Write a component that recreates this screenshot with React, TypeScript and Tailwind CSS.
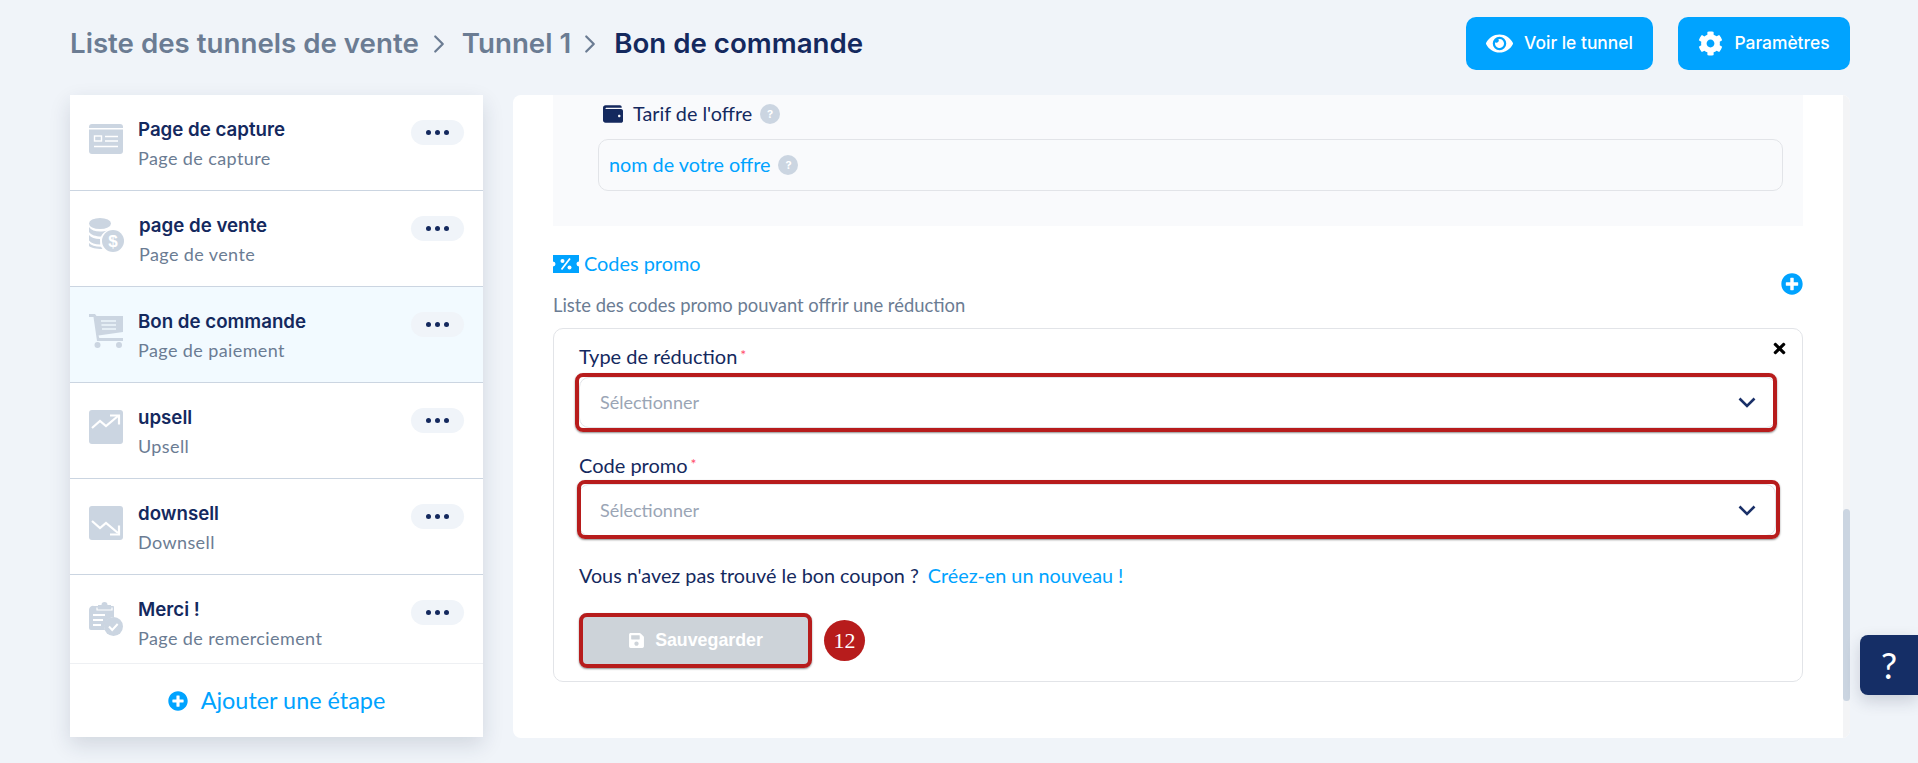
import React from "react";
import { FaCog, FaEye, FaPlusCircle, FaSave, FaTimes, FaWallet } from "react-icons/fa";
import { LuChevronRight } from "react-icons/lu";

const inter = "font-['Inter',sans-serif]";
const geo = "font-['Lato',sans-serif]";

const CaptureIcon = () => (
  <svg width="34" height="31" viewBox="0 0 34 31">
    <path d="M3 0h28a3 3 0 0 1 3 3v1H0V3a3 3 0 0 1 3-3z" fill="#cbd5e1" />
    <path d="M0 5.500h34V27a3 3 0 0 1-3 3H3a3 3 0 0 1-3-3z" fill="#cbd5e1" />
    <rect x="5.500" y="12" width="7" height="5" fill="none" stroke="#fff" strokeWidth="1.400" />
    <path d="M16 12.500h13M16 17h13M5 22.500h24" stroke="#fff" strokeWidth="1.400" />
  </svg>
);

const CoinsIcon = () => (
  <svg width="35" height="35" viewBox="0 0 35 35">
    <ellipse cx="11" cy="5.500" rx="11" ry="5.500" fill="#cbd5e1" />
    <path d="M0 9c2 3 6 4.500 11 4.500 3 0 5-.3 7-1-3 1.500-5 3.500-6 6-5 0-10-1.500-12-4.500z" fill="#cbd5e1" />
    <path d="M0 17c2 2.500 6 4 11 4l.2 5.500C6 26.500 2 25 0 22.500z" fill="#cbd5e1" />
    <path d="M0 25c2 2.500 6 3.500 12 3.800l1.500 2.200C7 31 2 30 0 28z" fill="#cbd5e1" />
    <circle cx="24" cy="23" r="11" fill="#cbd5e1" />
    <text x="24" y="29" textAnchor="middle" fontSize="17" fontWeight="700" fill="#fff" fontFamily="Liberation Sans">$</text>
  </svg>
);

const CartIcon = () => (
  <svg width="34" height="34" viewBox="0 0 34 34">
    <path d="M0 0h6l1.500 2H34v16L9.500 21.500l.8 2.500H34v3H8L4.500 3H0z" fill="#cbd5e1" />
    <path d="M12 7h15M12.500 11h14.500M13 15h14" stroke="#eef6fc" strokeWidth="1.400" />
    <circle cx="8.500" cy="31" r="3" fill="#cbd5e1" />
    <circle cx="30" cy="31" r="3" fill="#cbd5e1" />
  </svg>
);

const UpIcon = () => (
  <svg width="34" height="34" viewBox="0 0 34 34">
    <rect width="34" height="34" rx="3" fill="#cbd5e1" />
    <path d="M3 18l8-7 6 5 12-10" fill="none" stroke="#fff" strokeWidth="2.200" />
    <path d="M21 5.500h9v9" fill="none" stroke="#fff" strokeWidth="2.200" />
  </svg>
);

const DownIcon = () => (
  <svg width="34" height="34" viewBox="0 0 34 34">
    <rect width="34" height="34" rx="3" fill="#cbd5e1" />
    <path d="M3 15l8 7 6-5 12 10" fill="none" stroke="#fff" strokeWidth="2.200" />
    <path d="M21 28.500h9v-9" fill="none" stroke="#fff" strokeWidth="2.200" />
  </svg>
);

const ClipboardIcon = () => (
  <svg width="34" height="34" viewBox="0 0 34 34">
    <path d="M5 4h4V3h3.500a3 3 0 0 1 6 0H22v1h2a1 1 0 0 1 1 1v10a10 10 0 0 0-9 13H2a2 2 0 0 1-2-2V8a4 4 0 0 1 5-4z" fill="#cbd5e1" />
    <path d="M8 5.500v2.500h15V5.500" fill="none" stroke="#fff" strokeWidth="1.200" />
    <path d="M4 13h12M4 18h10M4 23h8" stroke="#fff" strokeWidth="1.800" />
    <circle cx="24.500" cy="24.500" r="9.500" fill="#cbd5e1" />
    <path d="M20 24.500l3.200 3.500 5.500-6" fill="none" stroke="#fff" strokeWidth="2" />
  </svg>
);

const TicketIcon = () => (
  <svg width="26" height="18" viewBox="0 0 26 18">
    <path d="M0 0h26v6.500a2.500 2.500 0 0 0 0 5V18H0v-6.500a2.500 2.500 0 0 0 0-5z" fill="#00a3ff" />
    <path d="M8.500 14.500L17 3.500" stroke="#fff" strokeWidth="1.800" />
    <circle cx="9.500" cy="6" r="2" fill="#fff" />
    <circle cx="16.500" cy="12.500" r="2" fill="#fff" />
  </svg>
);

const Chevron = () => (
  <svg width="18" height="11" viewBox="0 0 18 11" fill="none" stroke="#1a3068" strokeWidth="2.600">
    <path d="M1.500 1.500L9 9l7.500-7.500" />
  </svg>
);

const steps = [
  { title: "Page de capture", sub: "Page de capture", icon: <CaptureIcon />, iconTop: "pt-[6px]", height: "h-[96px] border-b border-[#cbd5e1]" },
  { title: "page de vente", sub: "Page de vente", icon: <CoinsIcon />, iconTop: "pt-[4px]", height: "h-[96px] border-b border-[#cbd5e1]" },
  { title: "Bon de commande", sub: "Page de paiement", icon: <CartIcon />, iconTop: "pt-[4px]", height: "h-[96px] border-b border-[#cbd5e1] bg-[#f2faff]" },
  { title: "upsell", sub: "Upsell", icon: <UpIcon />, iconTop: "pt-[4px]", height: "h-[96px] border-b border-[#cbd5e1]" },
  { title: "downsell", sub: "Downsell", icon: <DownIcon />, iconTop: "pt-[4px]", height: "h-[96px] border-b border-[#cbd5e1]" },
  { title: "Merci !", sub: "Page de remerciement", icon: <ClipboardIcon />, iconTop: "pt-[4px]", height: "h-[88px]" },
];

const Help = () => (
  <span className={`${inter} flex h-5 w-5 items-center justify-center rounded-full bg-[#cbd5e1] text-[11px] font-bold text-white`}>?</span>
);

const Dots = () => (
  <div className="mt-[2px] flex h-[25px] w-[53px] items-center justify-center gap-[4px] rounded-full bg-[#f0f4f9]">
    <span className="h-[5px] w-[5px] rounded-full bg-[#14295e]" />
    <span className="h-[5px] w-[5px] rounded-full bg-[#14295e]" />
    <span className="h-[5px] w-[5px] rounded-full bg-[#14295e]" />
  </div>
);

const Marked = ({ className }: { className: string }) => (
  <span className={`pointer-events-none absolute rounded-[8px] border-[4px] border-[#b71c1c] shadow-[0_1px_2px_rgba(0,0,0,0.45)] ${className}`} />
);

const SelectField = ({ label, box, mark }: { label: string; box: string; mark: string }) => (
  <div>
    <div className={`${geo} h-[26px] text-[20px] leading-[26px] text-[#14295e]`}>
      {label}
      <span className="relative -top-[4px] ml-[3px] text-[14px] text-[#ff4d6a]">*</span>
    </div>
    <div className={`relative flex items-center justify-between rounded-[10px] border border-[#e2e4e8] bg-white pl-[20px] pr-[19px] ${box}`}>
      <span className={`${geo} text-[18px] text-[#9aa5b5]`}>Sélectionner</span>
      <Chevron />
      <Marked className={mark} />
    </div>
  </div>
);

function App() {
  return (
    <div className="relative flex h-[763px] w-full flex-col overflow-hidden bg-[#f0f4f9]">
      <header className="flex h-[95px] shrink-0 items-center justify-between pb-[8px] pl-[70px] pr-[68px]">
        <div className={`${inter} mt-[1px] flex items-center text-[27.700px] font-semibold`}>
          <span className="text-[#6b7c93]">Liste des tunnels de vente</span>
          <LuChevronRight className="ml-[5px] mr-[8px] text-[#6b7c93]" size={30} strokeWidth={1.800} />
          <span className="text-[#6b7c93]">Tunnel 1</span>
          <LuChevronRight className="ml-[4px] mr-[9px] text-[#6b7c93]" size={30} strokeWidth={1.800} />
          <span className="text-[#14295e]">Bon de commande</span>
        </div>
        <div className={`${inter} flex gap-[25px] text-[17.400px] font-medium text-white`}>
          <button className="flex h-[53px] w-[187px] items-center justify-center gap-[11px] rounded-[10px] bg-[#00a3ff]">
            <FaEye size={27} />
            Voir le tunnel
          </button>
          <button className="flex h-[53px] w-[172px] items-center justify-center gap-[11px] rounded-[10px] bg-[#00a3ff]">
            <FaCog size={25} />
            Paramètres
          </button>
        </div>
      </header>

      <div className="flex h-[643px] shrink-0 gap-[30px] pl-[70px] pr-[68px]">
        <aside className="flex h-[642px] w-[413px] shrink-0 flex-col bg-white shadow-[0_8px_20px_rgba(30,40,70,0.14)]">
          {steps.map((step) => (
            <div key={step.title} className={`flex shrink-0 justify-between px-[19px] pt-[23px] ${step.height}`}>
              <div className="flex gap-[15px]">
                <div className={step.iconTop}>{step.icon}</div>
                <div className="-mt-[3px]">
                  <div className={`${inter} text-[18.700px] leading-[29px] font-semibold text-[#14295e]`}>{step.title}</div>
                  <div className={`${geo} text-[18px] leading-[28px] tracking-[0.4px] text-[#6b7c93]`}>{step.sub}</div>
                </div>
              </div>
              <Dots />
            </div>
          ))}
          <div className="flex h-[74px] shrink-0 items-center justify-center gap-[13px] border-t border-[#eef0f3] bg-white">
            <FaPlusCircle className="text-[#00a3ff]" size={20} />
            <span className={`${geo} text-[23.400px] text-[#00a3ff]`}>Ajouter une étape</span>
          </div>
        </aside>

        <main className="flex flex-1 overflow-hidden rounded-[8px] bg-white">
          <div className="flex-1 px-[40px]">
            <section className="h-[131px] bg-[#f9fafc] pl-[45px] pr-[20px] pt-[9px]">
              <div className={`${geo} ml-[5px] flex h-[20px] items-center gap-[10px] text-[19.800px] text-[#14295e]`}>
                <FaWallet size={20} />
                <div className="flex items-center gap-[8px]">
                  Tarif de l'offre
                  <Help />
                </div>
              </div>
              <div className={`${geo} mt-[15px] flex h-[52px] items-center gap-[8px] rounded-[10px] border border-[#e2e4e8] pl-[10px] text-[19.800px] text-[#00a3ff]`}>
                nom de votre offre
                <Help />
              </div>
            </section>

            <div className="relative mt-[26px]">
              <div className={`${geo} flex h-[24px] items-center gap-[5px] text-[19.900px] text-[#00a3ff]`}>
                <TicketIcon />
                Codes promo
              </div>
              <div className={`${geo} mt-[17px] text-[18.400px] leading-[24px] text-[#6b7c93]`}>
                Liste des codes promo pouvant offrir une réduction
              </div>
              <FaPlusCircle className="absolute right-0 top-[21px] text-[#00a3ff]" size={22} />
            </div>

            <section className="relative mt-[11px] h-[354px] rounded-[10px] border border-[#e2e4e8] pl-[25px] pr-[26px] pt-[14px]">
              <FaTimes className="absolute right-[14px] top-[11px] text-black" size={17} />
              <div className="flex flex-col gap-[24px]">
                <SelectField label="Type de réduction" box="mt-[8px] h-[51px]" mark="-left-[5px] -right-[2px] -top-[5px] -bottom-[5px]" />
                <SelectField label="Code promo" box="mt-[6px] h-[52px]" mark="-left-[3px] -right-[5px] -top-[5px] -bottom-[4px]" />
              </div>
              <div className={`${geo} mt-[28px] flex h-[24px] items-center text-[19.800px] text-[#14295e]`}>
                Vous n'avez pas trouvé le bon coupon ?
                <span className="ml-[9px] text-[#00a3ff]">Créez-en un nouveau !</span>
              </div>
              <div className="mt-[25px] flex items-center gap-[12px]">
                <button className="relative flex h-[55px] w-[233px] items-center justify-center gap-[10px] rounded-[8px] bg-[#cdd3d9] font-['Liberation_Sans',sans-serif] text-[17.800px] font-bold text-white">
                  <FaSave size={17} />
                  Sauvegarder
                  <Marked className="inset-0" />
                </button>
                <span className="flex h-[41px] w-[41px] items-center justify-center rounded-full bg-[#b71c1c] font-['Liberation_Serif',serif] text-[22px] text-white">
                  12
                </span>
              </div>
            </section>
          </div>

          <div className="flex w-[7px] shrink-0 flex-col bg-[#f3f4f6]">
            <div className="mt-[414px] h-[192px] rounded-full bg-[#cbd5e1]" />
          </div>
        </main>
      </div>

      <div className={`${geo} absolute right-0 top-[635px] flex h-[60px] w-[58px] items-center justify-center rounded-l-[8px] bg-[#152e66] text-[36px] text-white shadow-[0_6px_16px_rgba(30,40,70,0.18)]`}>
        ?
      </div>
    </div>
  );
}

export default App;
